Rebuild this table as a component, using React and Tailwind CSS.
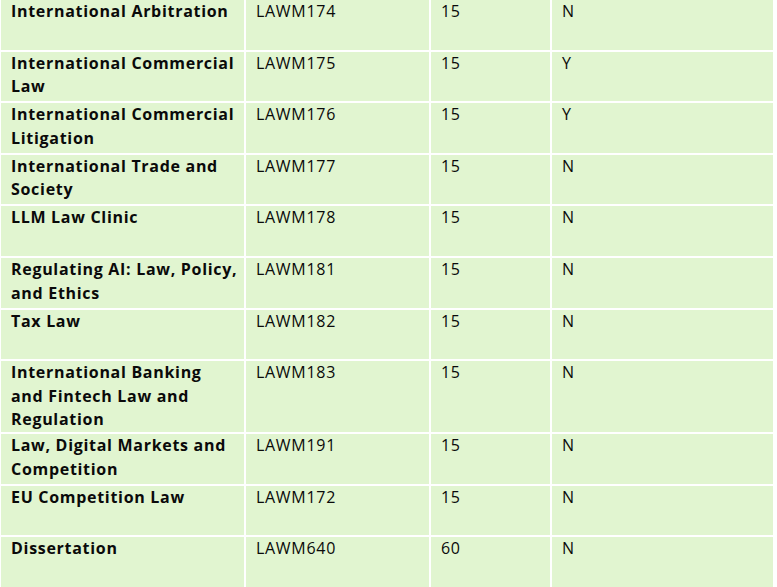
const rows = [
  ['International Arbitration', 'LAWM174', '15', 'N'],
  ['International Commercial Law', 'LAWM175', '15', 'Y'],
  ['International Commercial Litigation', 'LAWM176', '15', 'Y'],
  ['International Trade and Society', 'LAWM177', '15', 'N'],
  ['LLM Law Clinic', 'LAWM178', '15', 'N'],
  ['Regulating AI: Law, Policy, and Ethics', 'LAWM181', '15', 'N'],
  ['Tax Law', 'LAWM182', '15', 'N'],
  ['International Banking and Fintech Law and Regulation', 'LAWM183', '15', 'N'],
  ['Law, Digital Markets and Competition', 'LAWM191', '15', 'N'],
  ['EU Competition Law', 'LAWM172', '15', 'N'],
  ['Dissertation', 'LAWM640', '60', 'N'],
];

export default function App() {
  return (
    <div className="w-[777px] h-[587px] overflow-hidden bg-white">
      <table
        className="table-fixed border-separate border-spacing-[2px] -ml-px -mt-[2px] w-[776px] text-[16px] leading-[23.6px] tracking-[0.7px] text-[#0a0a0a]"
        style={{ fontFamily: '"Open Sans", "Noto Sans", sans-serif' }}
      >
        <colgroup>
          <col className="w-[243px]" />
          <col className="w-[183px]" />
          <col className="w-[119px]" />
          <col className="w-[221px]" />
        </colgroup>
        <tbody>
          {rows.map((r) => (
            <tr key={r[1]}>
              <td className="bg-[#e1f5d0] align-top h-[49.6px] pl-[10px] pr-[6px] font-bold">{r[0]}</td>
              <td className="bg-[#e1f5d0] align-top pl-[10px]">{r[1]}</td>
              <td className="bg-[#e1f5d0] align-top pl-[10px]">{r[2]}</td>
              <td className="bg-[#e1f5d0] align-top pl-[10px]">{r[3]}</td>
            </tr>
          ))}
        </tbody>
      </table>
    </div>
  );
}
